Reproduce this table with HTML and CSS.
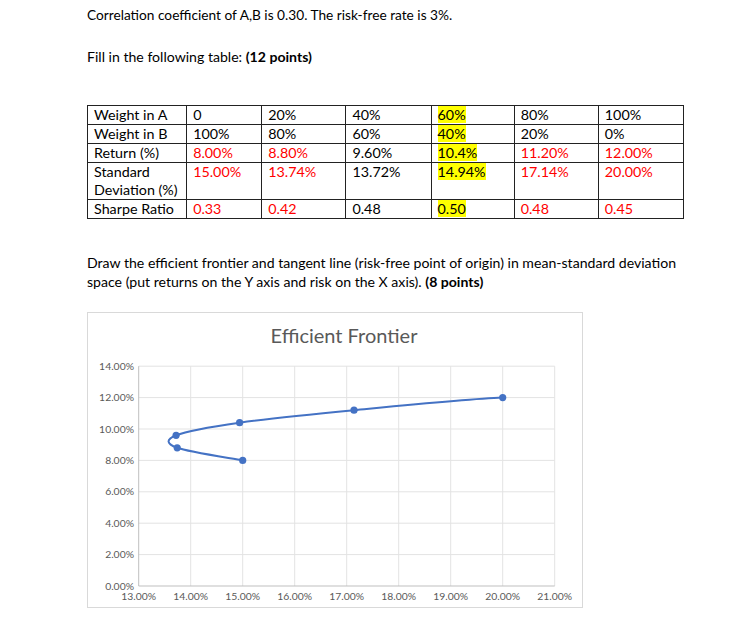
FILE: index.html
```html
<!DOCTYPE html>
<html>
<head>
<meta charset="utf-8">
<link rel="stylesheet" href="styles.css">
</head>
<body>
<div class="page">
  <p class="para first">Correlation coefficient of A,B is 0.30. The risk-free rate is 3%.</p>
  <p class="para second">Fill in the following table: <b>(12 points)</b></p>
  <table class="grid">
    <colgroup>
      <col class="c0"><col class="c1"><col class="c2"><col class="c3"><col class="c4"><col class="c5"><col class="c6">
    </colgroup>
    <tr><td>Weight in A</td><td>0</td><td>20%</td><td>40%</td><td><span class="hl">60%</span></td><td>80%</td><td>100%</td></tr>
    <tr><td>Weight in B</td><td>100%</td><td>80%</td><td>60%</td><td><span class="hl">40%</span></td><td>20%</td><td>0%</td></tr>
    <tr><td>Return (%)</td><td class="red">8.00%</td><td class="red">8.80%</td><td>9.60%</td><td><span class="hl">10.4%</span></td><td class="red">11.20%</td><td class="red">12.00%</td></tr>
    <tr><td>Standard<br>Deviation (%)</td><td class="red">15.00%</td><td class="red">13.74%</td><td>13.72%</td><td><span class="hl">14.94%</span></td><td class="red">17.14%</td><td class="red">20.00%</td></tr>
    <tr><td>Sharpe Ratio</td><td class="red">0.33</td><td class="red">0.42</td><td>0.48</td><td><span class="hl">0.50</span></td><td class="red">0.48</td><td class="red">0.45</td></tr>
  </table>
  <p class="para third">Draw the efficient frontier and tangent line (risk-free point of origin) in mean-standard deviation space (put returns on the Y axis and risk on the X axis). <b>(8 points)</b></p>
  <div class="chart">
    <svg width="494" height="294" viewBox="0 0 494 294" xmlns="http://www.w3.org/2000/svg">
      <text class="title" x="256" y="30" text-anchor="middle">Efficient Frontier</text>
      <g class="gridlines">
        <line x1="50.7" y1="241.6" x2="466.7" y2="241.6"/>
        <line x1="50.7" y1="210.2" x2="466.7" y2="210.2"/>
        <line x1="50.7" y1="178.8" x2="466.7" y2="178.8"/>
        <line x1="50.7" y1="147.4" x2="466.7" y2="147.4"/>
        <line x1="50.7" y1="116" x2="466.7" y2="116"/>
        <line x1="50.7" y1="84.6" x2="466.7" y2="84.6"/>
        <line x1="50.7" y1="53.2" x2="466.7" y2="53.2"/>
        <line x1="102.7" y1="53.2" x2="102.7" y2="273"/>
        <line x1="154.7" y1="53.2" x2="154.7" y2="273"/>
        <line x1="206.7" y1="53.2" x2="206.7" y2="273"/>
        <line x1="258.7" y1="53.2" x2="258.7" y2="273"/>
        <line x1="310.7" y1="53.2" x2="310.7" y2="273"/>
        <line x1="362.7" y1="53.2" x2="362.7" y2="273"/>
        <line x1="414.7" y1="53.2" x2="414.7" y2="273"/>
        <line x1="466.7" y1="53.2" x2="466.7" y2="273"/>
      </g>
      <g class="axes">
        <line x1="50.7" y1="53.2" x2="50.7" y2="273"/>
        <line x1="50.7" y1="273" x2="466.7" y2="273"/>
      </g>
      <g class="ylabels" text-anchor="end">
        <text x="46" y="56.8">14.00%</text>
        <text x="46" y="88.2">12.00%</text>
        <text x="46" y="119.6">10.00%</text>
        <text x="46" y="151">8.00%</text>
        <text x="46" y="182.4">6.00%</text>
        <text x="46" y="213.8">4.00%</text>
        <text x="46" y="245.2">2.00%</text>
        <text x="46" y="276.6">0.00%</text>
      </g>
      <g class="xlabels" text-anchor="middle">
        <text x="50.7" y="287">13.00%</text>
        <text x="102.7" y="287">14.00%</text>
        <text x="154.7" y="287">15.00%</text>
        <text x="206.7" y="287">16.00%</text>
        <text x="258.7" y="287">17.00%</text>
        <text x="310.7" y="287">18.00%</text>
        <text x="362.7" y="287">19.00%</text>
        <text x="414.7" y="287">20.00%</text>
        <text x="466.7" y="287">21.00%</text>
      </g>
      <path class="series" d="M154.7,147.4 C143.8,145.3 100.3,139.0 89.2,134.8 C78.1,130.6 77.7,126.5 88.1,122.3 C98.5,118.1 121.95,113.9 151.6,109.7 C181.25,105.5 222.15,101.4 266.0,97.2 C309.85,93.0 380,86 414.7,84.6"/>
      <g class="markers">
        <circle cx="154.7" cy="147.4" r="3.6"/>
        <circle cx="89.2" cy="134.8" r="3.6"/>
        <circle cx="88.1" cy="122.3" r="3.6"/>
        <circle cx="151.6" cy="109.7" r="3.6"/>
        <circle cx="266.0" cy="97.2" r="3.6"/>
        <circle cx="414.7" cy="84.6" r="3.6"/>
      </g>
    </svg>
  </div>
</div>
</body>
</html>
```

FILE: styles.css
```css
html, body {
  margin: 0;
  padding: 0;
  background: #ffffff;
}
.page {
  padding-left: 87px;
  width: 600px;
  font-family: Lato, "Open Sans", sans-serif;
  font-size: 14.1px;
  line-height: 19px;
  color: #000000;
}
.para {
  margin: 0;
}
.para.first {
  padding-top: 5px;
  font-size: 13.7px;
}
.para.second {
  margin-top: 23px;
}
.grid {
  margin-top: 39px;
  border-collapse: collapse;
  table-layout: fixed;
  width: 597px;
  font-size: 14.3px;
}
.c0 { width: 99px; }
.c1 { width: 75px; }
.c2 { width: 84px; }
.c3 { width: 85px; }
.c4 { width: 83px; }
.c5 { width: 84px; }
.c6 { width: 85px; }
.grid td {
  border: 1px solid #222222;
  padding: 0 0 0 6px;
  height: 18px;
  line-height: 18px;
  vertical-align: top;
  white-space: nowrap;
}
.grid td.red {
  color: #ff0000;
}
.hl {
  background: #ffff00;
}
.para.third {
  margin-top: 34px;
  width: 600px;
}
.chart {
  margin-top: 21px;
  width: 494px;
  height: 294px;
  border: 1px solid #d9d9d9;
}
.chart svg {
  display: block;
}
.title {
  font-family: Lato, sans-serif;
  font-size: 20px;
  fill: #595959;
}
.gridlines line {
  stroke: #e3e3e3;
  stroke-width: 1;
}
.axes line {
  stroke: #bfbfbf;
  stroke-width: 1;
}
.ylabels text, .xlabels text {
  font-family: Lato, sans-serif;
  font-size: 10.4px;
  fill: #595959;
}
.series {
  fill: none;
  stroke: #4472c4;
  stroke-width: 2;
}
.markers circle {
  fill: #4472c4;
}
```
